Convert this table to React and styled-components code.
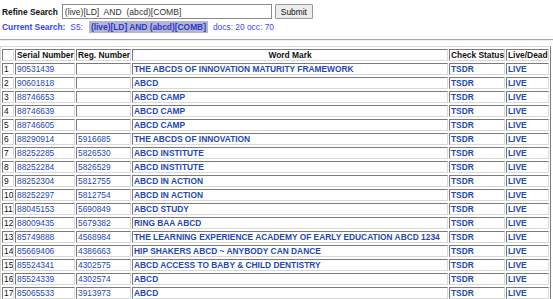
import styled, { createGlobalStyle } from "styled-components";

const GlobalStyle = createGlobalStyle`
    body {
        margin: 0;
        background: #ffffff;
        font-family: "Liberation Sans", Arial, sans-serif;
        font-size: 8.4px;
    }
`;

const rows = [
    ["90531439", "", "THE ABCDS OF INNOVATION MATURITY FRAMEWORK"],
    ["90601818", "", "ABCD"],
    ["88746653", "", "ABCD CAMP"],
    ["88746639", "", "ABCD CAMP"],
    ["88746605", "", "ABCD CAMP"],
    ["88290914", "5916685", "THE ABCDS OF INNOVATION"],
    ["88252285", "5826530", "ABCD INSTITUTE"],
    ["88252284", "5826529", "ABCD INSTITUTE"],
    ["88252304", "5812755", "ABCD IN ACTION"],
    ["88252297", "5812754", "ABCD IN ACTION"],
    ["88045153", "5690849", "ABCD STUDY"],
    ["88009435", "5679382", "RING BAA ABCD"],
    ["85749888", "4568984", "THE LEARNING EXPERIENCE ACADEMY OF EARLY EDUCATION ABCD 1234"],
    ["85669406", "4386663", "HIP SHAKERS ABCD ~ ANYBODY CAN DANCE"],
    ["85524341", "4302575", "ABCD ACCESS TO BABY & CHILD DENTISTRY"],
    ["85524339", "4302574", "ABCD"],
    ["85065533", "3913973", "ABCD"],
];

export default function App() {
    return (
        <Page>
            <GlobalStyle />
            <SearchForm>
                <Label>Refine Search</Label>
                <QueryInput defaultValue="(live)[LD]  AND  (abcd)[COMB]" />
                <SubmitButton>Submit</SubmitButton>
            </SearchForm>
            <CurrentSearch>
                <b>Current Search:</b>
                <span>S5:</span>
                <Highlight>(live)[LD] AND (abcd)[COMB]</Highlight>
                <span>docs: 20 occ: 70</span>
            </CurrentSearch>
            <Rule />
            <Results>
                <thead>
                    <tr>
                        <HeadCell $w="12px"></HeadCell>
                        <HeadCell $w="60px">Serial Number</HeadCell>
                        <HeadCell $w="55px">Reg. Number</HeadCell>
                        <HeadCell $center>Word Mark</HeadCell>
                        <HeadCell $w="56px">Check Status</HeadCell>
                        <HeadCell $w="43px">Live/Dead</HeadCell>
                    </tr>
                </thead>
                <tbody>
                    {rows.map(([serial, reg, mark], i) => (
                        <tr key={i}>
                            <Cell>{i + 1}</Cell>
                            <Cell><Link>{serial}</Link></Cell>
                            <Cell><Link>{reg}</Link></Cell>
                            <Cell><Link $bold>{mark}</Link></Cell>
                            <Cell><Link $bold>TSDR</Link></Cell>
                            <Cell><Link $bold>LIVE</Link></Cell>
                        </tr>
                    ))}
                </tbody>
            </Results>
        </Page>
    );
}

const Page = styled.div`
    padding: 4px 0 0 0;
    width: 553px;
`;

const SearchForm = styled.div`
    display: flex;
    align-items: center;
    height: 15px;
    padding-left: 2px;
`;

const Label = styled.span`
    font-weight: bold;
    color: #111;
    margin-right: 4px;
`;

const QueryInput = styled.input`
    box-sizing: border-box;
    width: 210px;
    height: 15px;
    padding: 0 2px;
    border: 1px solid #8a8a8a;
    font-family: "Liberation Sans", Arial, sans-serif;
    font-size: 8.6px;
    color: #333;
    outline: none;
`;

const SubmitButton = styled.button`
    box-sizing: border-box;
    margin-left: 3px;
    width: 38px;
    height: 15px;
    padding: 0;
    border: 1px solid #9a9a9a;
    border-radius: 1px;
    background: #ececec;
    font-family: "Liberation Sans", Arial, sans-serif;
    font-size: 8.4px;
    color: #111;
`;

const CurrentSearch = styled.div`
    display: flex;
    align-items: center;
    gap: 5px;
    height: 12px;
    margin-top: 2px;
    padding-left: 2px;
    color: #3846f0;

    b {
        font-weight: bold;
    }
`;

const Highlight = styled.span`
    background: #b4b6cc;
    color: #2a37d8;
    font-weight: bold;
    padding: 1px 2px;
    line-height: 10px;
    margin-left: 1px;
`;

const Rule = styled.div`
    height: 0;
    margin-top: 6px;
    width: 553px;
    border-top: 1px solid #a8a8a8;
    border-bottom: 1px solid #eeeeee;
`;

const Results = styled.table`
    margin-top: 5px;
    width: 551px;
    box-sizing: border-box;
    border: 1px solid;
    border-color: #d8d8d8 #7a7a7a #7a7a7a #d8d8d8;
    border-spacing: 1px 2px;
    table-layout: fixed;
`;

const HeadCell = styled.th`
    width: ${(p) => p.$w || "auto"};
    height: 12px;
    padding: 0 1px;
    box-sizing: border-box;
    border: 1px solid;
    border-color: #7a7a7a #d8d8d8 #d8d8d8 #7a7a7a;
    font-weight: bold;
    color: #111;
    text-align: ${(p) => (p.$center ? "center" : "left")};
    white-space: nowrap;
    overflow: hidden;
    line-height: 10px;
`;

const Cell = styled.td`
    height: 12px;
    padding: 0 1px;
    box-sizing: border-box;
    border: 1px solid;
    border-color: #7a7a7a #d8d8d8 #d8d8d8 #7a7a7a;
    color: #111;
    white-space: nowrap;
    overflow: hidden;
    line-height: 10px;
`;

const Link = styled.span`
    color: #2447b4;
    font-weight: ${(p) => (p.$bold ? "bold" : "normal")};
`;
